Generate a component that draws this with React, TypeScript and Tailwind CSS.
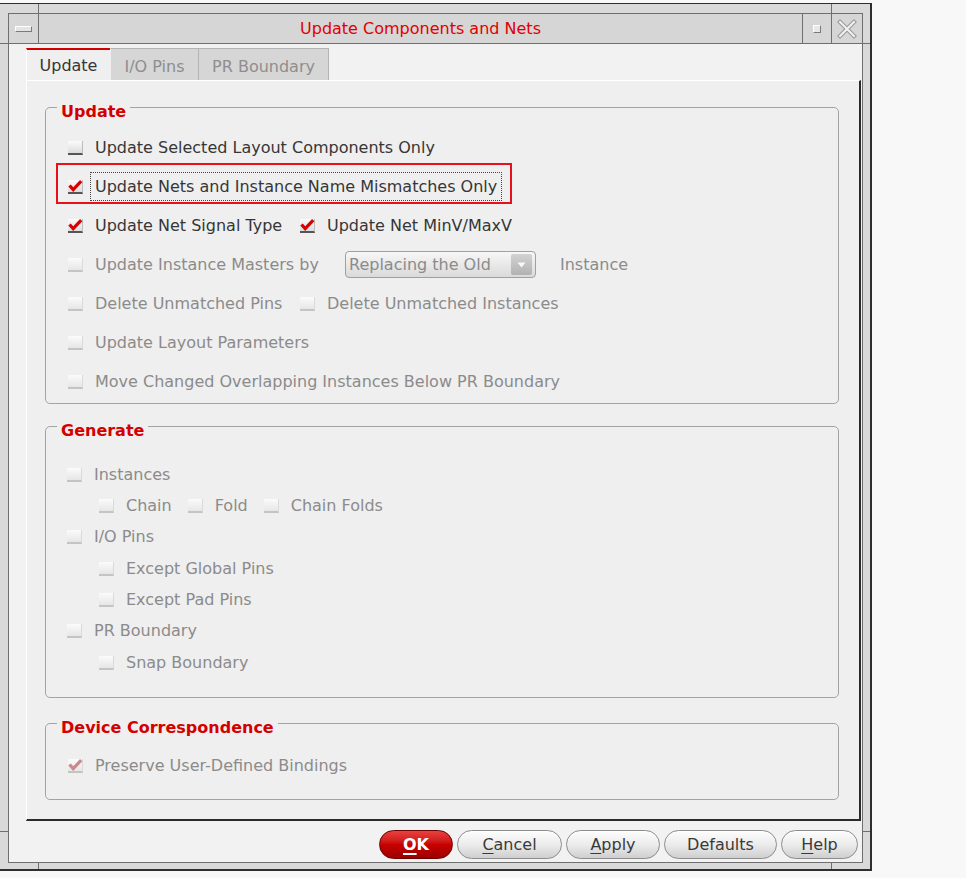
import React from "react";

type BoxProps = { checked?: boolean; disabled?: boolean };

function Box({ checked = false, disabled = false }: BoxProps) {
  return (
    <span
      className={
        disabled
          ? "relative block w-[15px] h-[14px] shrink-0 bg-gradient-to-b from-[#fbfbfb] to-[#e6e6e6] border-b-2 border-r border-b-[#c4c4c4] border-r-[#dadada]"
          : "relative block w-[15px] h-[14px] shrink-0 bg-gradient-to-b from-[#fbfbfb] to-[#dcdcdc] border-b-2 border-r border-b-[#555555] border-r-[#bdbdbd]"
      }
    >
      {checked && (
        <svg className="absolute left-[0px] top-[0px]" width="15" height="12" viewBox="0 0 15 12">
          <path
            d="M1.5 5.5 L5.2 9.6 L13.2 1.2"
            fill="none"
            stroke={disabled ? "#c88a8a" : "#d80000"}
            strokeWidth="3.2"
          />
        </svg>
      )}
    </span>
  );
}

type ItemProps = { label: string; checked?: boolean; disabled?: boolean; className?: string };

function Item({ label, checked, disabled, className }: ItemProps) {
  return (
    <div className={"flex items-center shrink-0 " + (className ?? "")}>
      <Box checked={checked} disabled={disabled} />
      <span
        className={
          disabled
            ? "ml-[12px] text-[16px] leading-[20px] whitespace-nowrap text-[#8b8b8b]"
            : "ml-[12px] text-[16px] leading-[20px] whitespace-nowrap text-[#363636]"
        }
      >
        {label}
      </span>
    </div>
  );
}

type GroupProps = { title: string; className?: string; children: React.ReactNode };

function Group({ title, className, children }: GroupProps) {
  return (
    <div className={"relative border border-[#a3a3a3] rounded-[5px] " + (className ?? "")}>
      <span className="absolute left-[11px] top-[-5px] px-[4px] bg-[#efefef] text-[16px] leading-[18px] font-bold text-[#d40000] whitespace-nowrap">
        {title}
      </span>
      {children}
    </div>
  );
}

function Btn({ w, children }: { w: string; children: React.ReactNode }) {
  return (
    <button
      className={
        "h-[29px] rounded-full border border-[#8c8c8c] bg-gradient-to-b from-[#fdfdfd] via-[#ececec] to-[#cfcfcf] text-[16px] text-[#3a3a3a] flex items-center justify-center shadow-[inset_0_1px_0_#ffffff] " +
        w
      }
    >
      {children}
    </button>
  );
}

export default function App() {
  return (
    <div className="w-[966px] h-[878px] bg-[#f8f8f8] pt-[3px] font-['DejaVu_Sans',sans-serif] overflow-hidden">
      <div className="relative w-[872px] h-[868px] bg-[#d9d9d9] border-t border-r-2 border-b-2 border-[#2e2e2e] pt-[9px] pl-[8px] pr-[7px] pb-[6px]">
        {/* frame handle marks */}
        <div className="absolute top-0 left-[38px] w-px h-[9px] bg-[#6f6f6f]" />
        <div className="absolute top-0 left-[831px] w-px h-[9px] bg-[#6f6f6f]" />
        <div className="absolute bottom-0 left-[38px] w-px h-[6px] bg-[#6f6f6f]" />
        <div className="absolute bottom-0 left-[831px] w-px h-[6px] bg-[#6f6f6f]" />
        <div className="absolute left-0 top-[39px] w-[8px] h-px bg-[#6f6f6f]" />
        <div className="absolute right-0 top-[39px] w-[7px] h-px bg-[#6f6f6f]" />
        <div className="absolute left-0 top-[827px] w-[8px] h-px bg-[#6f6f6f]" />
        <div className="absolute right-0 top-[827px] w-[7px] h-px bg-[#6f6f6f]" />

        <div className="h-full border border-[#6f6f6f] flex flex-col">
          {/* title bar */}
          <div className="h-[30px] shrink-0 flex border-b border-[#6f6f6f] bg-[#d6d6d6]">
            <div className="w-[30px] border-r border-[#6f6f6f] flex items-center justify-center">
              <div className="w-[17px] h-[6px] bg-[#e4e4e4] border border-t-white border-l-white border-r-[#7a7a7a] border-b-[#7a7a7a]" />
            </div>
            <div className="flex-1 flex items-center justify-center text-[16px] text-[#e00000] whitespace-nowrap">
              Update Components and Nets
            </div>
            <div className="w-[29px] border-l border-[#6f6f6f] flex items-center justify-center">
              <div className="w-[8px] h-[8px] bg-[#e8e8e8] border border-t-white border-l-white border-r-[#7a7a7a] border-b-[#7a7a7a]" />
            </div>
            <div className="w-[31px] border-l border-[#6f6f6f] flex items-center justify-center">
              <svg width="20" height="20" viewBox="0 0 20 20">
                <path d="M3 3 L17 17 M17 3 L3 17" stroke="#9a9a9a" strokeWidth="4.2" strokeLinecap="square" fill="none" />
                <path d="M3 3 L17 17 M17 3 L3 17" stroke="#f2f2f2" strokeWidth="2" strokeLinecap="square" fill="none" />
              </svg>
            </div>
          </div>

          {/* content */}
          <div className="flex-1 bg-[#f2f2f2] pl-[17px] pt-[4px] pr-[1px] flex flex-col">
            {/* tabs */}
            <div className="h-[32px] flex shrink-0">
              <div className="w-[84px] h-[32px] bg-[#efefef] border-t-2 border-[#d40000] border-l border-l-white flex justify-center pt-[7px] text-[16px] leading-[18px] text-[#363636]">
                Update
              </div>
              <div className="w-[89px] h-[32px] bg-[#d6d6d6] border-t border-r border-[#b4b4b4] border-l border-l-[#eeeeee] flex justify-center pt-[9px] text-[16px] leading-[18px] text-[#8e8e8e]">
                I/O Pins
              </div>
              <div className="w-[130px] h-[32px] bg-[#d6d6d6] border-t border-r border-[#b4b4b4] flex justify-center pt-[9px] text-[16px] leading-[18px] text-[#8e8e8e] whitespace-nowrap">
                PR Boundary
              </div>
            </div>

            {/* tab pane */}
            <div className="h-[741px] shrink-0 bg-[#efefef] border-t border-l border-t-white border-l-white border-r-2 border-b-2 border-r-[#2a2a2a] border-b-[#2a2a2a] pt-[26px] pl-[18px] pr-[20px] flex flex-col">
              <Group title="Update" className="pt-[20px] pb-[2px]">
                <div className="h-[39px] flex items-center pl-[22px]">
                  <Item label="Update Selected Layout Components Only" />
                </div>
                <div className="relative h-[39px] flex items-center pl-[22px]">
                  <div className="absolute left-[10px] top-[-4px] w-[456px] h-[41px] border-2 border-[#e8101a]" />
                  <Box checked />
                  <span className="ml-[7px] h-[29px] px-[4px] border border-dotted border-[#444444] flex items-center text-[16px] leading-[20px] whitespace-nowrap text-[#363636]">
                    Update Nets and Instance Name Mismatches Only
                  </span>
                </div>
                <div className="h-[39px] flex items-center pl-[22px]">
                  <Item label="Update Net Signal Type" checked className="w-[232px]" />
                  <Item label="Update Net MinV/MaxV" checked />
                </div>
                <div className="h-[39px] flex items-center pl-[22px]">
                  <Item label="Update Instance Masters by" disabled className="w-[277px]" />
                  <div className="w-[191px] h-[27px] rounded-[4px] border border-[#a0a0a0] bg-gradient-to-b from-[#f7f7f7] to-[#dadada] flex items-center pl-[3px] pr-[3px]">
                    <span className="flex-1 text-[16px] leading-[20px] text-[#8b8b8b] whitespace-nowrap">Replacing the Old</span>
                    <span className="w-[21px] h-[21px] rounded-[2px] bg-gradient-to-b from-[#d2d2d2] to-[#b2b2b2] flex items-center justify-center">
                      <svg width="9" height="6" viewBox="0 0 9 6">
                        <path d="M0.5 0.5 L8.5 0.5 L4.5 5.5 Z" fill="#f8f8f8" />
                      </svg>
                    </span>
                  </div>
                  <span className="ml-[24px] text-[16px] leading-[20px] text-[#8b8b8b]">Instance</span>
                </div>
                <div className="h-[39px] flex items-center pl-[22px]">
                  <Item label="Delete Unmatched Pins" disabled className="w-[232px]" />
                  <Item label="Delete Unmatched Instances" disabled />
                </div>
                <div className="h-[39px] flex items-center pl-[22px]">
                  <Item label="Update Layout Parameters" disabled />
                </div>
                <div className="h-[39px] flex items-center pl-[22px]">
                  <Item label="Move Changed Overlapping Instances Below PR Boundary" disabled />
                </div>
              </Group>

              <Group title="Generate" className="mt-[22px] pt-[32px] pb-[19px]">
                <div className="h-[31.33px] flex items-center pl-[21px]">
                  <Item label="Instances" disabled />
                </div>
                <div className="h-[31.33px] flex items-center pl-[53px] gap-[16px]">
                  <Item label="Chain" disabled />
                  <Item label="Fold" disabled />
                  <Item label="Chain Folds" disabled />
                </div>
                <div className="h-[31.33px] flex items-center pl-[21px]">
                  <Item label="I/O Pins" disabled />
                </div>
                <div className="h-[31.33px] flex items-center pl-[53px]">
                  <Item label="Except Global Pins" disabled />
                </div>
                <div className="h-[31.33px] flex items-center pl-[53px]">
                  <Item label="Except Pad Pins" disabled />
                </div>
                <div className="h-[31.33px] flex items-center pl-[21px]">
                  <Item label="PR Boundary" disabled />
                </div>
                <div className="h-[31.33px] flex items-center pl-[53px]">
                  <Item label="Snap Boundary" disabled />
                </div>
              </Group>

              <Group title="Device Correspondence" className="mt-[25px] pt-[22px] pb-[14px]">
                <div className="h-[39px] flex items-center pl-[22px]">
                  <Item label="Preserve User-Defined Bindings" checked disabled />
                </div>
              </Group>
            </div>

            {/* buttons */}
            <div className="mt-[9px] h-[29px] flex justify-end gap-[4px] pr-[3px] shrink-0">
              <button className="w-[74px] h-[29px] rounded-full border border-[#6a0000] bg-gradient-to-b from-[#e84040] via-[#c80000] to-[#9e0000] text-white font-bold text-[16px] flex items-center justify-center">
                <span className="underline underline-offset-[3px] decoration-[2px]">O</span>K
              </button>
              <Btn w="w-[105px]">
                <span className="underline underline-offset-[3px]">C</span>ancel
              </Btn>
              <Btn w="w-[94px]">
                <span className="underline underline-offset-[3px]">A</span>pply
              </Btn>
              <Btn w="w-[113px]">Defaults</Btn>
              <Btn w="w-[77px]">
                <span className="underline underline-offset-[3px]">H</span>elp
              </Btn>
            </div>
          </div>
        </div>
      </div>
    </div>
  );
}
